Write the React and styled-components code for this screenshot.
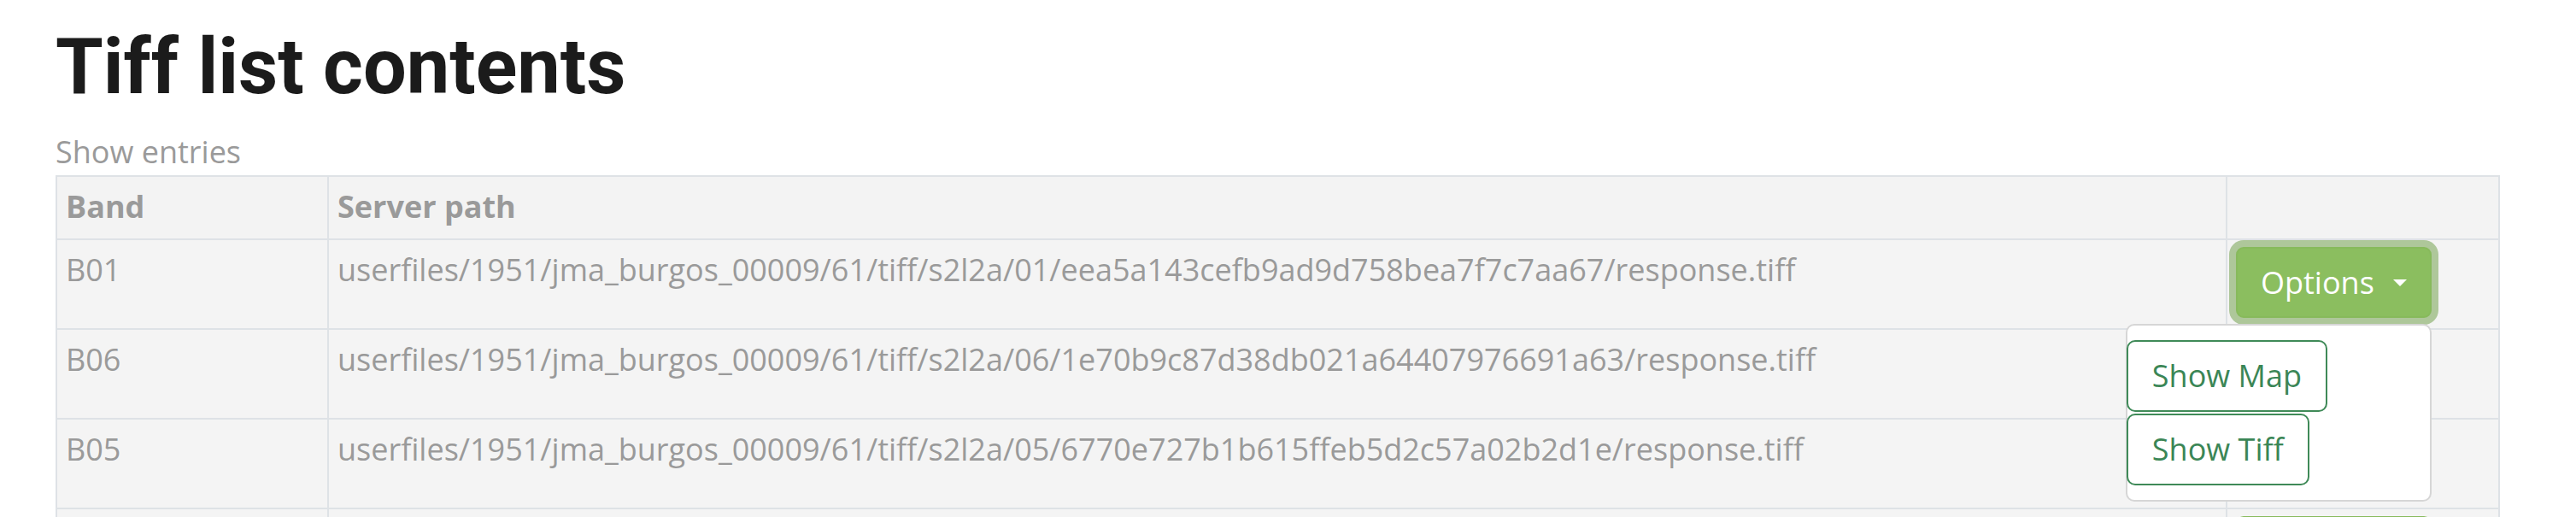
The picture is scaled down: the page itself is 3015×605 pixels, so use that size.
import React from "react";
import styled, { createGlobalStyle } from "styled-components";

const GlobalStyle = createGlobalStyle`
  html, body { margin: 0; padding: 0; background: #ffffff; }
  body { font-family: "Open Sans", "Liberation Sans", sans-serif; }
`;

const Page = styled.div`
  padding: 25px 89px 0 65px;
  font-family: "Open Sans", "Liberation Sans", sans-serif;
  font-size: 36px;
  line-height: 54px;
  color: #9a9a9a;
`;

const Title = styled.h1`
  margin: 0 0 18px;
  font-family: Roboto, "Liberation Sans", sans-serif;
  font-weight: 700;
  font-size: 90px;
  line-height: 108px;
  color: #1b1b1b;
`;

const EntriesLabel = styled.div`
  font-size: 36px;
  line-height: 54px;
  color: #9a9a9a;
`;

const Table = styled.table`
  width: 2861px;
  table-layout: fixed;
  border-collapse: collapse;
  border: 2px solid #dee2e6;
  background: #f4f4f4;
`;

const HeadCell = styled.th`
  text-align: left;
  vertical-align: top;
  font-weight: 700;
  color: #9a9a9a;
  padding: 8px 10px 10px;
  border: 2px solid #dee2e6;
  background: #f3f3f3;
  line-height: 54px;
`;

const Cell = styled.td`
  vertical-align: top;
  padding: 8px 10px 12px;
  border: 2px solid #dee2e6;
  line-height: 54px;
  white-space: nowrap;
  color: #9a9a9a;
`;

const DropdownWrap = styled.div`
  position: relative;
  display: inline-block;
`;

const OptionsButton = styled.button`
  display: inline-flex;
  align-items: center;
  height: 83px;
  padding: 0 27px;
  font-family: "Open Sans", "Liberation Sans", sans-serif;
  font-size: 36px;
  line-height: 54px;
  color: #ffffff;
  background: #8bbe5f;
  border: 2px solid #87ba5b;
  border-radius: 9px;
  box-shadow: ${(p) => (p.$focused ? "0 0 0 8px #aec79a" : "none")};
  cursor: pointer;

  &::after {
    content: "";
    display: inline-block;
    margin-left: 22px;
    border-top: 8px solid #ffffff;
    border-left: 8.5px solid transparent;
    border-right: 8.5px solid transparent;
  }
`;

const Menu = styled.div`
  position: absolute;
  top: calc(100% + 7px);
  right: 0;
  z-index: 10;
  width: 358px;
  box-sizing: border-box;
  padding: 17px 0;
  background: #ffffff;
  border: 2px solid #d6d6d6;
  border-radius: 10px;
  display: flex;
  flex-direction: column;
  align-items: flex-start;
`;

const MenuButton = styled.button`
  height: 84px;
  margin-left: -1px;
  padding: 0 28px;
  font-family: "Open Sans", "Liberation Sans", sans-serif;
  font-size: 36px;
  line-height: 54px;
  color: #3b8656;
  background: #ffffff;
  border: 2px solid #3f8a58;
  border-radius: 10px;
  cursor: pointer;

  & + & {
    margin-top: 2px;
  }
`;

const rows = [
  { band: "B01", path: "userfiles/1951/jma_burgos_00009/61/tiff/s2l2a/01/eea5a143cefb9ad9d758bea7f7c7aa67/response.tiff", open: true },
  { band: "B06", path: "userfiles/1951/jma_burgos_00009/61/tiff/s2l2a/06/1e70b9c87d38db021a64407976691a63/response.tiff" },
  { band: "B05", path: "userfiles/1951/jma_burgos_00009/61/tiff/s2l2a/05/6770e727b1b615ffeb5d2c57a02b2d1e/response.tiff" },
  { band: "B04", path: "userfiles/1951/jma_burgos_00009/61/tiff/s2l2a/04/3c1f0a9e27d84b6c95a1e0f4d7b2c8a5/response.tiff" },
];

export default function App() {
  return (
    <>
      <GlobalStyle />
      <Page>
        <Title>Tiff list contents</Title>
        <EntriesLabel>Show entries</EntriesLabel>
        <Table>
          <colgroup>
            <col style={{ width: 318 }} />
            <col />
            <col style={{ width: 319 }} />
          </colgroup>
          <thead>
            <tr>
              <HeadCell>Band</HeadCell>
              <HeadCell>Server path</HeadCell>
              <HeadCell></HeadCell>
            </tr>
          </thead>
          <tbody>
            {rows.map((r) => (
              <tr key={r.band}>
                <Cell>{r.band}</Cell>
                <Cell>{r.path}</Cell>
                <Cell>
                  <DropdownWrap>
                    <OptionsButton $focused={r.open}>Options</OptionsButton>
                    {r.open && (
                      <Menu>
                        <MenuButton>Show Map</MenuButton>
                        <MenuButton>Show Tiff</MenuButton>
                      </Menu>
                    )}
                  </DropdownWrap>
                </Cell>
              </tr>
            ))}
          </tbody>
        </Table>
      </Page>
    </>
  );
}
